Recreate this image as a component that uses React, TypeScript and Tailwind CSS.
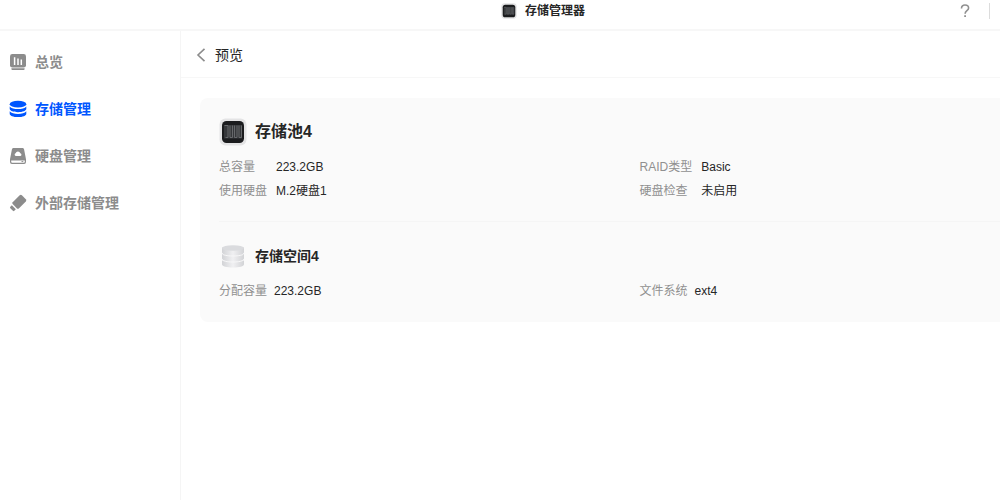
import React from 'react';
import clsx from 'clsx';

type IconProps = { className?: string };

const OverviewIcon = ({ className }: IconProps) => (
  <svg viewBox="0 0 18 18" className={className} aria-hidden="true">
    <rect x="1" y="1" width="16" height="13.6" rx="2.4" fill="currentColor" />
    <path d="M2.400 15.200h13.200v.7a1 1 0 0 1-1 1H3.400a1 1 0 0 1-1-1z" fill="currentColor" />
    <path d="M5.600 4.200v7.800M9 5.500v6.500M12.300 6.500v5.500" stroke="#fff" strokeWidth="1.500" />
  </svg>
);

const StorageIcon = ({ className }: IconProps) => (
  <svg viewBox="0 0 18 18" className={className} fill="currentColor" aria-hidden="true">
    <ellipse cx="9" cy="4.200" rx="8.300" ry="3.400" />
    <path d="M.7 6.400c1.400 1.800 4.700 2.700 8.300 2.700s6.900-.9 8.300-2.700v2.400c0 1.900-3.700 3.400-8.300 3.400S.7 10.700.7 8.800z" />
    <path d="M.7 11.300c1.400 1.800 4.700 2.700 8.300 2.700s6.900-.9 8.300-2.700v2.400c0 1.900-3.700 3.400-8.300 3.400S.7 15.600.7 13.700z" />
  </svg>
);

const DiskIcon = ({ className }: IconProps) => (
  <svg viewBox="0 0 18 18" className={className} aria-hidden="true">
    <path d="M4.600 1h8.800c.9 0 1.500.6 1.700 1.400L17 12.200v2.900a1.900 1.900 0 0 1-1.900 1.900H2.900A1.900 1.900 0 0 1 1 15.100v-2.900l1.900-9.800C3.100 1.600 3.700 1 4.600 1z" fill="currentColor" />
    <path d="M2.200 13.600h13.600v1.100a1 1 0 0 1-1 1H3.200a1 1 0 0 1-1-1z" fill="#fff" />
    <path d="M12.500 14.600h1.800" stroke="currentColor" strokeWidth="1" />
    <path d="M6.800 8.900a1.400 1.400 0 0 1-.2-2.700 2.500 2.500 0 0 1 4.700 0 1.400 1.400 0 0 1 .2 2.700z" fill="#fff" />
  </svg>
);

const UsbIcon = ({ className }: IconProps) => (
  <svg viewBox="0 0 18 18" className={className} fill="currentColor" aria-hidden="true">
    <path d="M10.700 1.300a1.600 1.600 0 0 1 2.200 0l3.900 3.900a1.600 1.600 0 0 1 0 2.200l-7 7a1.300 1.300 0 0 1-1.800 0L3.700 10.100a1.300 1.300 0 0 1 0-1.800z" />
    <path d="M2.800 11.300l4 4-1.500 1.500a1 1 0 0 1-1.400 0l-2.600-2.600a1 1 0 0 1 0-1.400z" />
  </svg>
);

const PoolIcon = ({ className }: IconProps) => (
  <svg viewBox="0 0 28 28" className={className} aria-hidden="true">
    <rect x="0.500" y="0.500" width="27" height="27" rx="6" fill="#e4e4e5" />
    <rect x="3" y="3" width="22" height="22" rx="4.500" fill="#1b1c1e" />
    <rect x="5" y="7" width="18" height="13.500" fill="#35373a" />
    <path d="M5.500 7.500h3.500v12H6.500M11 7.500v12h2.500v-12M15.500 7.500v12H18v-12M20 7.500v12h2.500v-12" fill="none" stroke="#6c6e71" strokeWidth=".9" />
  </svg>
);

const VolumeIcon = ({ className }: IconProps) => (
  <svg viewBox="0 0 28 28" className={className} aria-hidden="true">
    <defs>
      <linearGradient id="volume-side" x1="0" x2="1">
        <stop offset="0" stopColor="#d2d3d6" />
        <stop offset=".5" stopColor="#f0f0f2" />
        <stop offset="1" stopColor="#d2d3d6" />
      </linearGradient>
    </defs>
    <path d="M3 18.500h22v4c0 1.700-4.900 3-11 3s-11-1.300-11-3z" fill="url(#volume-side)" />
    <path d="M3 12h22v4.500c0 1.700-4.900 3-11 3s-11-1.300-11-3z" fill="url(#volume-side)" />
    <path d="M3 5.500h22v5c0 1.700-4.900 3-11 3s-11-1.300-11-3z" fill="url(#volume-side)" />
    <path d="M3 11.500c1 1.600 5 2.500 11 2.500s10-.9 11-2.500M3 17.500c1 1.600 5 2.500 11 2.500s10-.9 11-2.500" fill="none" stroke="#f8f8f9" strokeWidth="1" />
    <ellipse cx="14" cy="6" rx="11" ry="2.800" fill="#dadbde" />
  </svg>
);

const navItems = [
  { label: '总览', icon: OverviewIcon },
  { label: '存储管理', icon: StorageIcon, active: true },
  { label: '硬盘管理', icon: DiskIcon },
  { label: '外部存储管理', icon: UsbIcon },
];

const poolLeft = [
  { label: '总容量', value: '223.2GB' },
  { label: '使用硬盘', value: 'M.2硬盘1' },
];
const poolRight = [
  { label: 'RAID类型', value: 'Basic' },
  { label: '硬盘检查', value: '未启用' },
];

type DetailListProps = { items: { label: string; value: string }[]; className?: string };

const DetailList = ({ items, className }: DetailListProps) => (
  <dl className={clsx('grid grid-cols-[auto_1fr] gap-y-1 text-xs leading-5', className)}>
    {items.map((item) => (
      <React.Fragment key={item.label}>
        <dt className="text-[#909090]">{item.label}</dt>
        <dd className="text-[#262626]">{item.value}</dd>
      </React.Fragment>
    ))}
  </dl>
);

const App = () => {
  return (
    <div className="flex min-h-screen flex-col overflow-hidden bg-white font-['Liberation_Sans','Noto_Sans_CJK_SC',sans-serif] text-[#262626]">
      <header className="grid h-[31px] grid-cols-[1fr_auto_1fr] border-b-2 border-[#f7f7f7] pb-2">
        <div className="col-start-2 ml-[86px] flex items-center gap-2">
          <PoolIcon className="size-4" />
          <h1 className="text-xs font-bold">存储管理器</h1>
        </div>
        <div className="flex items-center justify-end gap-4 pr-[10px]">
          <button type="button" aria-label="帮助" className="text-[#909090]">
            <svg viewBox="0 0 16 16" className="size-4" fill="none" stroke="currentColor" strokeWidth="1.600" aria-hidden="true">
              <path d="M4.500 5.400C4.500 3.200 5.900 2 8 2s3.600 1.200 3.600 3c0 2.600-3.500 2.800-3.500 5.700" />
              <path d="M8.100 12.300v1.800" strokeWidth="1.800" />
            </svg>
          </button>
          <span className="h-4 w-px bg-[#dcdcdc]" />
        </div>
      </header>

      <div className="flex flex-1">
        <nav className="w-[181px] shrink-0 border-r border-[#f5f5f5] pt-[7px]">
          {navItems.map(({ label, icon: Icon, active }) => (
            <a
              key={label}
              href="#"
              aria-current={active ? 'page' : undefined}
              className={clsx(
                'flex h-[47px] items-center gap-2 pl-[9px] text-sm font-bold',
                active ? 'text-[#0056ff]' : 'text-[#8c8c8c]',
              )}
            >
              <Icon className="size-[18px]" />
              {label}
            </a>
          ))}
        </nav>

        <main className="min-w-0 flex-1">
          <div className="flex h-[47px] items-center border-b border-[#f7f7f7] pl-[14px] pt-[2px]">
            <button type="button" className="flex items-center gap-2 text-sm">
              <svg viewBox="0 0 12 16" className="h-4 w-3" fill="none" stroke="#8c8c8c" strokeWidth="1.600" aria-hidden="true">
                <path d="M9.500 1.800L3 8l6.500 6.200" />
              </svg>
              预览
            </button>
          </div>

          <div className="ml-[19px] mt-5 rounded-l-lg bg-[#fafafa] pl-[19px]">
            <section className="pb-5 pt-5">
              <div className="flex items-center gap-2">
                <PoolIcon className="size-7" />
                <h2 className="text-base font-bold">存储池4</h2>
              </div>
              <div className="mt-[11px] grid grid-cols-[7fr_6fr]">
                <DetailList items={poolLeft} className="gap-x-[9px]" />
                <DetailList items={poolRight} className="gap-x-[9px]" />
              </div>
            </section>
            <section className="border-t border-[#f5f5f5] pb-[21px] pt-5">
              <div className="flex items-center gap-2">
                <VolumeIcon className="size-7" />
                <h2 className="text-sm font-bold">存储空间4</h2>
              </div>
              <div className="mt-[11px] grid grid-cols-[7fr_6fr]">
                <DetailList items={[{ label: '分配容量', value: '223.2GB' }]} className="gap-x-[7px]" />
                <DetailList items={[{ label: '文件系统', value: 'ext4' }]} className="gap-x-[7px]" />
              </div>
            </section>
          </div>
        </main>
      </div>
    </div>
  );
};

export default App;
